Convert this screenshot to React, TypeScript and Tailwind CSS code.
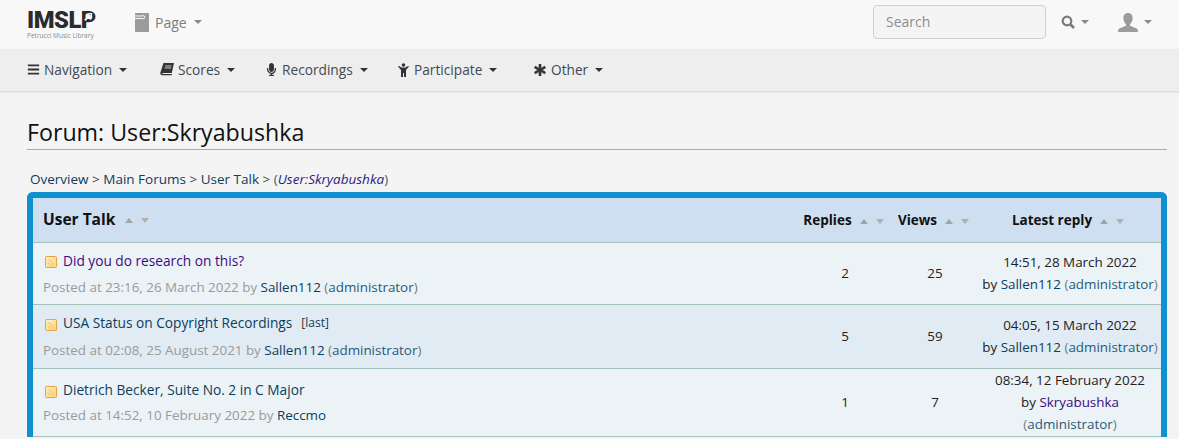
import React from "react";
import { FaBars, FaMicrophone, FaAsterisk } from "react-icons/fa";

const Caret = ({ c = "border-t-[#333]" }: { c?: string }) => (
  <span className={`inline-block w-0 h-0 border-x-4 border-x-transparent border-t-4 ${c}`} />
);

const NavItem = ({ icon, label, cls }: { icon: React.ReactNode; label: string; cls: string }) => (
  <div className={`flex items-center ${cls}`}>
    <span className="w-[14px] flex justify-center mr-[4px]">{icon}</span>
    <span>{label}</span>
    <span className="ml-[7px] flex"><Caret /></span>
  </div>
);

const Sort = ({ ml = "ml-[8px]" }: { ml?: string }) => (
  <span className={`inline-flex items-center gap-[8px] ${ml} align-middle`}>
    <svg width="8" height="5" viewBox="0 0 8 5"><path d="M4 0 8 5H0z" fill="#a3a3a3" /></svg>
    <svg width="8" height="5" viewBox="0 0 8 5"><path d="M0 0h8L4 5z" fill="#b0b0b0" /></svg>
  </span>
);

const Rss = () => (
  <svg width="12" height="12" viewBox="0 0 12 12" className="inline-block shrink-0">
    <defs>
      <linearGradient id="rssg" x1="0" y1="0" x2="1" y2="1">
        <stop offset="0" stopColor="#fdf3cc" />
        <stop offset="1" stopColor="#f9d274" />
      </linearGradient>
    </defs>
    <rect x="0.5" y="0.5" width="11" height="11" rx="1" fill="url(#rssg)" stroke="#e8a040" />
    <path d="M2.500 7a2.500 2.500 0 0 1 2.500 2.500M2.500 4a5.500 5.500 0 0 1 5.500 5.500" fill="none" stroke="#f3c060" strokeWidth="1" />
  </svg>
);

const A = ({ children, v }: { children: React.ReactNode; v?: boolean }) => (
  <span className={v ? "text-[#3b0a80]" : "text-[#0b3d5e]"}>{children}</span>
);

const Paren = ({ children }: { children: React.ReactNode }) => (
  <span className="text-[#6d7b85]">(<span className="text-[#275a7a]">{children}</span>)</span>
);

type Row = {
  title: string; visited?: boolean; last?: boolean; posted: string; by: string; admin: boolean;
  replies: number; views: number; reply: React.ReactNode; h: string; bg: string; mt: string; pt: string;
};

const rows: Row[] = [
  {
    title: "Did you do research on this?", visited: true, posted: "Posted at 23:16, 26 March 2022 by", by: "Sallen112", admin: true,
    replies: 2, views: 25, h: "h-[62px]", bg: "bg-[#ebf3f7]", mt: "mt-[6px]", pt: "pt-[2px]",
    reply: <>14:51, 28 March 2022<br /><span>by <A>Sallen112</A> <Paren>administrator</Paren></span></>,
  },
  {
    title: "USA Status on Copyright Recordings", last: true, posted: "Posted at 02:08, 25 August 2021 by", by: "Sallen112", admin: true,
    replies: 5, views: 59, h: "h-[64px]", bg: "bg-[#e1ebf3]", mt: "mt-[7px]", pt: "pt-[2px]",
    reply: <>04:05, 15 March 2022<br /><span>by <A>Sallen112</A> <Paren>administrator</Paren></span></>,
  },
  {
    title: "Dietrich Becker, Suite No. 2 in C Major", posted: "Posted at 14:52, 10 February 2022 by", by: "Reccmo", admin: false,
    replies: 1, views: 7, h: "h-[68px]", bg: "bg-[#ebf3f7]", mt: "mt-[5px]", pt: "pt-[2px]",
    reply: <>08:34, 12 February 2022<br /><span>by <A v>Skryabushka</A></span><br /><Paren>administrator</Paren></>,
  },
];

export default function App() {
  return (
    <div className="w-[1179px] h-[439px] overflow-hidden bg-[#f4f4f4] font-['Open_Sans','Noto_Sans',sans-serif]">
      {/* top bar */}
      <header className="h-[49px] bg-[#f8f8f8] flex items-center pl-[27px] pr-[27px] pb-[5px]">
        <div className="w-[68px] flex flex-col relative top-[3px]">
          <div className="relative h-[17px] leading-[17px] text-[24.5px] font-black text-[#2b2b2b] tracking-[-0.5px] font-['Roboto',sans-serif] scale-x-[0.97] origin-left whitespace-nowrap">
            IMSLP
            <svg className="absolute left-[59px] top-[2px]" width="9" height="8" viewBox="0 0 9 8">
              <path d="M2 1.500 7.500 0v5.500M2 1.500V7" stroke="#f8f8f8" strokeWidth="1.400" fill="none" />
              <circle cx="1.400" cy="6.600" r="1.200" fill="#f8f8f8" />
              <circle cx="6.400" cy="5.600" r="1.200" fill="#f8f8f8" />
            </svg>
          </div>
          <div className="text-[6.5px] leading-[8px] mt-[4px] text-[#8a8a8a] whitespace-nowrap">Petrucci Music Library</div>
        </div>
        <div className="ml-[39px] flex items-center text-[14px] text-[#7d7d7d]">
          <svg width="15" height="19" viewBox="0 0 15 19" className="mr-[6px]">
            <path d="M1 0h13a1 1 0 0 1 1 1v17a1 1 0 0 1-1 1H2a1 1 0 0 1-1-1z" fill="#9b9b9b" />
            <path d="M0 3h9M0 5.500h9" stroke="#f8f8f8" strokeWidth="1" />
            <path d="M9 2.500a1.600 1.600 0 0 1 0 3.400" stroke="#f8f8f8" fill="none" />
          </svg>
          <span>Page</span>
          <span className="ml-[7px] flex"><Caret c="border-t-[#8a8a8a]" /></span>
        </div>
        <div className="ml-auto flex items-center">
          <div className="w-[173px] h-[34px] rounded-[4px] border border-[#cfcfcf] bg-[#f4f4f4] flex items-center pl-[12px] pb-[2px] text-[14px] text-[#8d8d8d]">Search</div>
          <svg width="14" height="14" viewBox="0 0 14 14" className="ml-[15px]">
            <circle cx="6" cy="6" r="4.300" fill="none" stroke="#7a7a7a" strokeWidth="2.200" />
            <path d="M9 9l4 4" stroke="#7a7a7a" strokeWidth="2.600" />
          </svg>
          <span className="ml-[6px] flex"><Caret c="border-t-[#8a8a8a]" /></span>
          <svg width="20" height="19" viewBox="0 0 20 19" className="ml-[29px]">
            <path d="M10 0c3 0 4.600 2.200 4.600 5.200 0 2.600-1.200 5-2.600 6v1.600l6 2.400c1 .4 2 1 2 3.800H0c0-2.800 1-3.400 2-3.800l6-2.400v-1.600c-1.400-1-2.600-3.400-2.600-6C5.400 2.200 7 0 10 0z" fill="#9b9b9b" />
          </svg>
          <span className="ml-[6px] flex"><Caret c="border-t-[#8a8a8a]" /></span>
        </div>
      </header>

      {/* nav */}
      <nav className="h-[43px] bg-[#eeeeee] border-b border-[#dcdcdc] shadow-[0_1px_2px_rgba(0,0,0,0.06)] flex items-center pl-[26px] text-[13.7px] text-[#3f4a52]">
        <NavItem cls="w-[134px]" label="Navigation" icon={<FaBars className="text-[#333] text-[13px]" />} />
        <NavItem cls="w-[104px]" label="Scores" icon={
          <svg width="14" height="13" viewBox="0 0 14 13">
            <path d="M3.500 0H14l-2.200 10H3c-.8 0-1 .9-.3 1H12l-.3 1.300H2.500C.8 12.300 0 11 .4 9.500z" fill="#333" />
            <path d="M5 3h6.500M4.600 5h6.500" stroke="#eeeeee" strokeWidth=".8" />
          </svg>
        } />
        <NavItem cls="w-[132px]" label="Recordings" icon={<FaMicrophone className="text-[#333] text-[13px]" />} />
        <NavItem cls="w-[137px]" label="Participate" icon={
          <svg width="11" height="14" viewBox="0 0 11 14">
            <circle cx="5.500" cy="2" r="1.800" fill="#333" />
            <path d="M0 3.500 1 3l2.500 1.500h4L10 3l1 .5L8 7v7H6V10H5v4H3V7z" fill="#333" />
          </svg>
        } />
        <NavItem cls="" label="Other" icon={<FaAsterisk className="text-[#333] text-[12px] stroke-[#333] stroke-[30px]" />} />
      </nav>

      {/* content */}
      <main className="px-[27px] pr-[12px]">
        <h1 className="mt-[24px] h-[33px] leading-[32px] text-[23.2px] text-[#111] border-b border-[#a9a9a9] box-content pb-0">Forum: User:Skryabushka</h1>
        <div className="mt-[20px] ml-[3px] h-[18px] leading-[18px] text-[13.5px] text-[#444] whitespace-nowrap">
          <A>Overview</A> &gt; <A>Main Forums</A> &gt; <A>User Talk</A> &gt; <span className="text-[#555]">(<i className="text-[#2c1a80]">User:Skryabushka</i>)</span>
        </div>

        <div className="mt-[4px] border-[6px] border-b-0 border-[#1190d0] rounded-t-[6px] overflow-hidden">
          <table className="w-full table-fixed border-collapse text-[13.4px] text-[#222]">
            <colgroup>
              <col />
              <col className="w-[96px]" />
              <col className="w-[84px]" />
              <col className="w-[185px]" />
            </colgroup>
            <thead>
              <tr className="h-[44px] bg-[#cddff0] border-b border-[#a4c2b8] text-[#111]">
                <th className="text-left pl-[10px] text-[15.5px] font-bold">User Talk<Sort ml="ml-[10px]" /></th>
                <th className="text-[13.5px] font-bold whitespace-nowrap pr-[1px]">Replies<Sort /></th>
                <th className="text-[13.5px] font-bold whitespace-nowrap pr-[1px]">Views<Sort /></th>
                <th className="text-[13.5px] font-bold whitespace-nowrap pr-[1px]">Latest reply<Sort /></th>
              </tr>
            </thead>
            <tbody>
              {rows.map((r) => (
                <tr key={r.title} className={`${r.h} ${r.bg} border-b border-[#a4c2b8]`}>
                  <td className={`pl-[10px] ${r.pt} align-middle`}>
                    <div className="flex items-center gap-[6px] h-[20px] text-[13.7px]">
                      <span className="ml-[2px] mt-[3px] flex"><Rss /></span>
                      <A v={r.visited}>{r.title}</A>
                      {r.last && <span className="ml-[3px] text-[12px] text-[#333]">[<span className="text-[#0b3d5e]">last</span>]</span>}
                    </div>
                    <div className={`${r.mt} text-[#9a9a9a] whitespace-nowrap`}>
                      {r.posted} <A>{r.by}</A>{r.admin && <> <Paren>administrator</Paren></>}
                    </div>
                  </td>
                  <td className="text-center pl-[2px]">{r.replies}</td>
                  <td className="text-center pl-[2px]">{r.views}</td>
                  <td className="text-center leading-[22px] pl-[3px] whitespace-nowrap">{r.reply}</td>
                </tr>
              ))}
            </tbody>
          </table>
        </div>
      </main>
    </div>
  );
}
